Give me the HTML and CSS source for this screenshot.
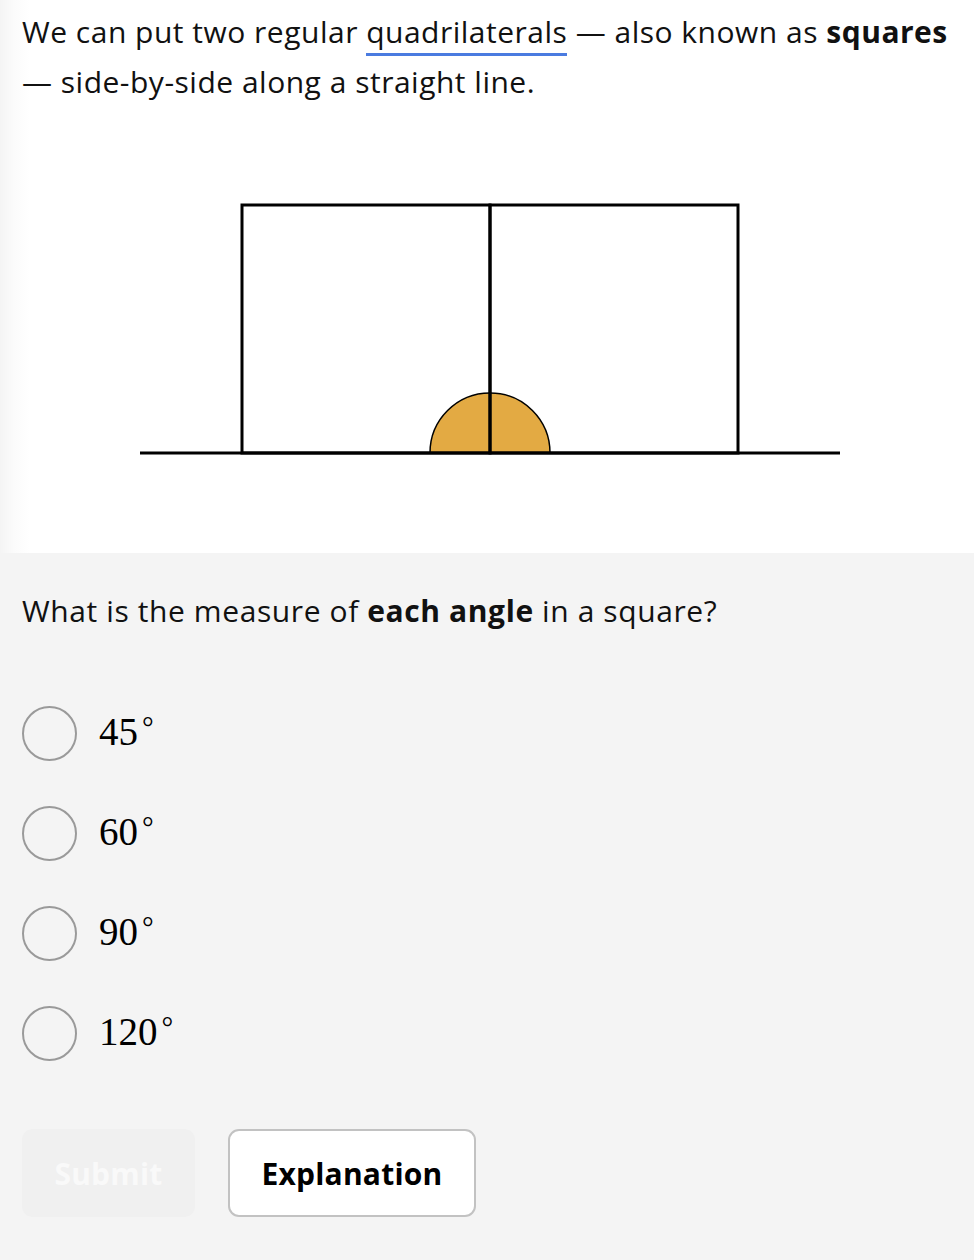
FILE: index.html
```html
<!DOCTYPE html>
<html>
<head>
<meta charset="utf-8">
<link rel="stylesheet" href="styles.css">
</head>
<body>
<section class="intro">
  <p class="lead">We can put two regular <span class="term">quadrilaterals</span> — also known as <b>squares</b> — side-by-side along a straight line.</p>
  <svg class="figure" width="974" height="440" viewBox="0 113 974 440">
    <path d="M430 453 A60 60 0 0 1 550 453 Z" fill="#e3aa43" stroke="#000" stroke-width="1.5"/>
    <rect x="242" y="205" width="248" height="248" fill="none" stroke="#000" stroke-width="3"/>
    <rect x="490" y="205" width="248" height="248" fill="none" stroke="#000" stroke-width="3"/>
    <line x1="140" y1="453" x2="840" y2="453" stroke="#000" stroke-width="3"/>
  </svg>
</section>
<section class="quiz">
  <p class="question">What is the measure of <b>each angle</b> in a square?</p>
  <ul class="options">
    <li class="option"><span class="radio"></span><span class="math">45<span class="deg">°</span></span></li>
    <li class="option"><span class="radio"></span><span class="math">60<span class="deg">°</span></span></li>
    <li class="option"><span class="radio"></span><span class="math">90<span class="deg">°</span></span></li>
    <li class="option"><span class="radio"></span><span class="math">120<span class="deg">°</span></span></li>
  </ul>
  <div class="actions">
    <button class="btn btn-submit">Submit</button>
    <button class="btn btn-explain">Explanation</button>
  </div>
</section>
</body>
</html>
```

FILE: styles.css
```css
html, body {
  margin: 0;
  padding: 0;
}
body {
  width: 974px;
  height: 1260px;
  overflow: hidden;
  font-family: "Open Sans", "Noto Sans", sans-serif;
  color: #111;
  background: #f4f4f4;
}
.intro {
  height: 553px;
  background: linear-gradient(to right, #f4f4f4 0px, #fbfbfb 14px, #ffffff 30px);
  display: flex;
  flex-direction: column;
}
.lead {
  margin: 0;
  padding: 7px 6px 0 22px;
  font-size: 30px;
  letter-spacing: 0.5px;
  line-height: 50px;
}
.lead b, .question b {
  font-weight: 700;
}
.term {
  border-bottom: 3px solid #4a7be0;
  padding-bottom: 1px;
}
.figure {
  display: block;
  margin-top: 6px;
}
.quiz {
  padding: 33px 22px 0 22px;
}
.question {
  margin: 0;
  font-size: 30px;
  letter-spacing: 0.6px;
  line-height: 50px;
}
.options {
  list-style: none;
  margin: 47px 0 0 0;
  padding: 0;
}
.option {
  height: 100px;
  display: flex;
  align-items: center;
  gap: 22px;
}
.radio {
  width: 51px;
  height: 51px;
  border: 2px solid #9a9a9a;
  border-radius: 50%;
  flex: none;
}
.math {
  font-family: "Liberation Serif", "DejaVu Serif", serif;
  font-size: 39px;
  color: #000;
  position: relative;
  top: -2px;
}
.deg {
  font-size: 0.75em;
  margin-left: 4px;
  vertical-align: 8px;
}
.actions {
  margin-top: 46px;
  display: flex;
  gap: 33px;
}
.btn {
  height: 88px;
  border-radius: 11px;
  font-family: "Open Sans", "Noto Sans", sans-serif;
  font-weight: 700;
  font-size: 30px;
  letter-spacing: 0.2px;
  padding: 0;
}
.btn-submit {
  width: 173px;
  background: #f0f0f0;
  border: none;
  color: #f9f9f9;
}
.btn-explain {
  width: 248px;
  background: #fff;
  border: 2px solid #c2c2c2;
  color: #000;
}
```
